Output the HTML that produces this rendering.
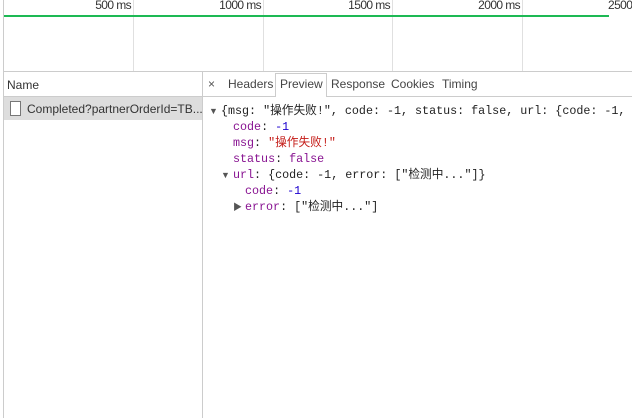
<!DOCTYPE html>
<html><head><meta charset="utf-8"><style>
body{margin:0;width:632px;height:418px;background:#fff;position:relative;overflow:hidden;font-family:"Liberation Sans","Noto Sans CJK SC",sans-serif;}
.a{position:absolute}
.vl{position:absolute;width:1px;background:#e0e0e0;top:0;height:72px}
.lbl{position:absolute;top:-2px;font-size:12px;color:#333;letter-spacing:-0.6px;text-align:right;width:60px}
.mono{font-family:"Liberation Mono","Noto Sans CJK SC",monospace;font-size:11.7px;white-space:pre;color:#222;line-height:16px;position:absolute}
.k{color:#881391}.n{color:#1c00cf}.s{color:#c41a16}.b{color:#881391}
.tab{position:absolute;top:77px;font-size:12px;color:#444}
.tri{position:absolute;font-size:9px;color:#555;line-height:16px}
</style></head><body>
<div class="a" style="left:3px;top:0;width:1px;height:418px;background:#ccc"></div>
<div class="vl" style="left:133px"></div>
<div class="vl" style="left:263px"></div>
<div class="vl" style="left:392px"></div>
<div class="vl" style="left:522px"></div>
<div class="lbl" style="left:71px">500 ms</div>
<div class="lbl" style="left:201px">1000 ms</div>
<div class="lbl" style="left:330px">1500 ms</div>
<div class="lbl" style="left:460px">2000 ms</div>
<div class="lbl" style="left:608px;text-align:left">2500</div>
<div class="a" style="left:4px;top:15px;width:605px;height:2px;background:#1db954"></div>
<div class="a" style="left:3px;top:71px;width:629px;height:1px;background:#ccc"></div>
<div class="a" style="left:3px;top:96px;width:629px;height:1px;background:#ccc"></div>
<div class="a" style="left:202px;top:72px;width:1px;height:346px;background:#ccc"></div>
<div class="a" style="left:7px;top:78px;font-size:12px;color:#333">Name</div>
<div class="a" style="left:4px;top:97px;width:198px;height:23px;background:#ddd"></div>
<div class="a" style="left:10px;top:101px;width:9px;height:13px;border:1px solid #777;background:#fff"></div>
<div class="a" style="left:27px;top:102px;font-size:12px;color:#333">Completed?partnerOrderId=TB...</div>
<div class="tab" style="left:208px;color:#555">×</div>
<div class="tab" style="left:228px">Headers</div>
<div class="a" style="left:275px;top:73px;width:50px;height:23px;border:1px solid #ccc;border-bottom:none;background:#fff"></div>
<div class="tab" style="left:280px">Preview</div>
<div class="tab" style="left:331px">Response</div>
<div class="tab" style="left:391px">Cookies</div>
<div class="tab" style="left:442px">Timing</div>
<div class="tri" style="left:209px;top:103px">▼</div>
<div class="mono" style="left:221px;top:103px">{msg: "操作失败!", code: -1, status: false, url: {code: -1,</div>
<div class="mono" style="left:233px;top:119px"><span class="k">code</span>: <span class="n">-1</span></div>
<div class="mono" style="left:233px;top:135px"><span class="k">msg</span>: <span class="s">"操作失败!"</span></div>
<div class="mono" style="left:233px;top:151px"><span class="k">status</span>: <span class="b">false</span></div>
<div class="tri" style="left:221px;top:167px">▼</div>
<div class="mono" style="left:233px;top:167px"><span class="k">url</span>: {code: -1, error: ["检测中..."]}</div>
<div class="mono" style="left:245px;top:183px"><span class="k">code</span>: <span class="n">-1</span></div>
<div class="tri" style="left:233px;top:199px">▶</div>
<div class="mono" style="left:245px;top:199px"><span class="k">error</span>: ["检测中..."]</div>
</body></html>
